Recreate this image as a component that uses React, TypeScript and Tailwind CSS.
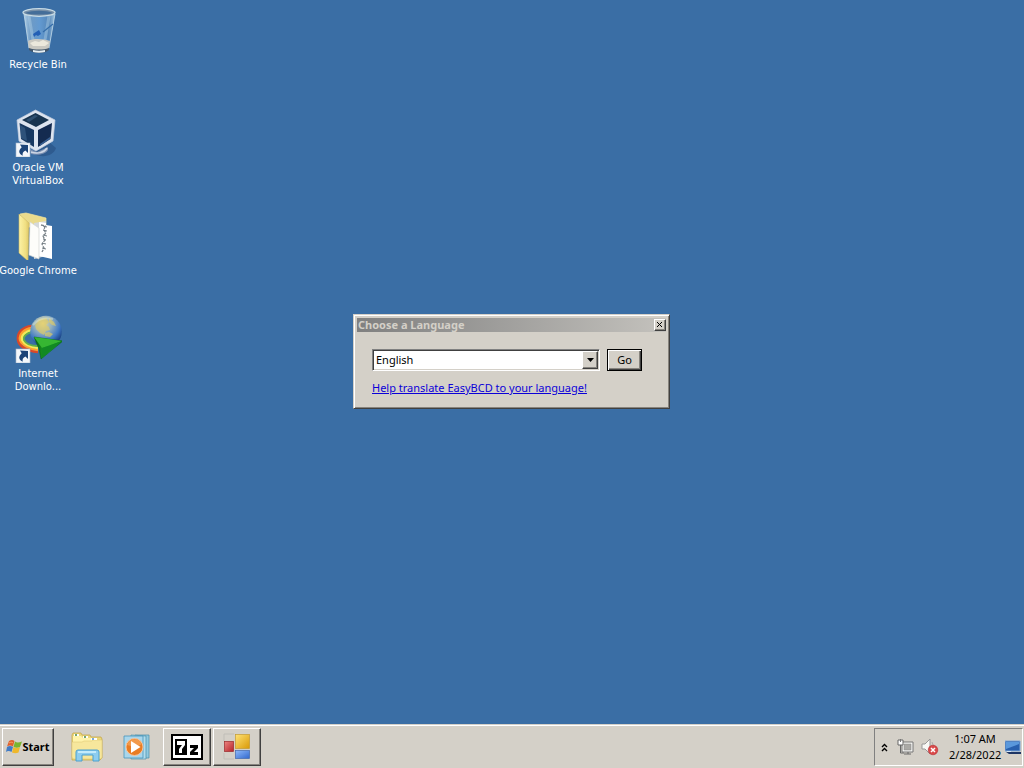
import React, { useState } from 'react';

const raised =
  'border border-t-white border-l-white border-r-[#404040] border-b-[#404040] shadow-[inset_-1px_-1px_0_#87847e]';

function ShortcutArrow() {
  return (
    <g>
      <rect x="2" y="34" width="14" height="14" fill="#f4f7fb" stroke="#a9b8ca" strokeWidth=".6" />
      <path d="M6 35.500l8 .5v8l-2.600-2.500c-2.300 1.100-3.200 2.700-2.700 5.200-3.400-1.600-5.200-4.600-1-8.400z" fill="#1c4478" />
    </g>
  );
}

function RecycleIcon() {
  return (
    <svg viewBox="0 0 48 48" className="size-12" aria-hidden="true">
      <defs>
        <linearGradient id="glass" x1="0" x2="1">
          <stop offset="0" stopColor="#c7e2f4" stopOpacity=".85" />
          <stop offset=".22" stopColor="#7fa9d0" stopOpacity=".75" />
          <stop offset=".5" stopColor="#6da5dc" stopOpacity=".8" />
          <stop offset=".8" stopColor="#5f90c0" stopOpacity=".75" />
          <stop offset="1" stopColor="#b7d6ec" stopOpacity=".85" />
        </linearGradient>
      </defs>
      <path d="M10 8l5 35c3 4 17 4 20 0l6-35z" fill="url(#glass)" />
      <path d="M10 8l5 34M41 8l-6 34" stroke="#c2d9e9" strokeWidth="1" fill="none" opacity=".8" />
      <path d="M15 10l4 24M35 10l-4 24" stroke="#c2dff0" strokeWidth="3" opacity=".35" />
      <path d="M14 35c5-3 17-2 22 0l-1.500 8c-5 3-15 3-19.500 0z" fill="#c9c8c1" />
      <path d="M16 37l5-2 4 1 4-2 6 3-4 3H19z" fill="#ebe8dc" />
      <path d="M15 42c6 2 14 2 20 0v2c-4 4-16 4-20 0z" fill="#43586d" />
      <path d="M19 44c4 1 8 1 12 0v2c-4 1-8 1-12 0z" fill="#e6eef2" />
      <path d="M22 26l3-2 2 4-3 2-2-1-2 2-1-3z" fill="#235fb5" />
      <path d="M29 26l10-8" stroke="#356da9" strokeWidth="1.300" />
      <ellipse cx="25" cy="6.500" rx="16" ry="3.800" fill="#7890a8" stroke="#c9dce6" strokeWidth="1.300" />
      <path d="M11 7c7-3 21-3 28 0-5 2-22 2-28 0" fill="#456e99" />
    </svg>
  );
}

function VirtualBoxIcon() {
  return (
    <svg viewBox="0 0 48 48" className="size-12" aria-hidden="true">
      <path d="M20 43l15-10 7 6c-2 7-11 10-20 7z" fill="#1e3f6d" opacity=".4" />
      <path d="M16 40l7 3 11-5v3c-2 4-10 6-17 4z" fill="#7c90b2" />
      <path d="M17 43c6 2 13 1 16-4" stroke="#ccd6e5" strokeWidth="1.500" fill="none" />
      <path d="M21.500 1L41 11 39 32 22 42 5 32 3 11z" fill="#dde4ef" stroke="#c4cedf" strokeWidth=".7" />
      <path d="M21.500 4L35 11 22 18 8 11z" fill="#18344f" />
      <path d="M5.500 14L20 21v17L7 30z" fill="#173860" />
      <path d="M24 21l14-7-1.500 16L24 38z" fill="#142b50" />
      <path d="M12 11l9-5 3 1-9 6zM6 16l5 3 2 13-6-3z" fill="#4c739b" opacity=".45" />
      <path d="M26 35l10-7v2l-10 7z" fill="#365d90" />
      <ShortcutArrow />
    </svg>
  );
}

function FolderIcon() {
  return (
    <svg viewBox="0 0 48 48" className="size-12" aria-hidden="true">
      <defs>
        <linearGradient id="folder" x1="0" x2="1">
          <stop offset="0" stopColor="#fcf2a6" />
          <stop offset=".65" stopColor="#f0df82" />
          <stop offset="1" stopColor="#dcc567" />
        </linearGradient>
      </defs>
      <path d="M6 2l6-1 20 5v9H14z" fill="#eadb8c" stroke="#f6e79d" strokeWidth=".7" />
      <path d="M20 11l12-2v35l-12 3z" fill="#d5d9dc" />
      <path d="M25 10l7 1v2l6 1v33l-13-3z" fill="#fff" />
      <path d="M27 13l4 1-1 4 2 3-3 3 2 4-3 4 2 4-2 4" stroke="#7c858b" strokeWidth="1.300" fill="none" strokeDasharray="3 1" />
      <path d="M29 14l4 1M29 18l4 1M29 23l4 1M29 27l3 1M28 31l4 1M28 36l4 1" stroke="#69747c" strokeWidth=".9" />
      <path d="M16 10l9 6v31l-10-4z" fill="#fdfdfa" stroke="#d2d5d3" strokeWidth=".7" />
      <path d="M5 2l10 9-1 38L5 41z" fill="url(#folder)" stroke="#cfbb62" strokeWidth=".6" />
    </svg>
  );
}

function DownloadIcon() {
  return (
    <svg viewBox="0 0 48 48" className="size-12" aria-hidden="true">
      <defs>
        <radialGradient id="globe" cx=".4" cy=".25" r=".75">
          <stop offset="0" stopColor="#eadc9c" />
          <stop offset=".38" stopColor="#91afc0" />
          <stop offset=".72" stopColor="#3e78c4" />
          <stop offset="1" stopColor="#153978" />
        </radialGradient>
        <linearGradient id="arrow" x1="0" x2="1">
          <stop offset="0" stopColor="#075a11" />
          <stop offset=".5" stopColor="#22b92b" />
          <stop offset="1" stopColor="#086d16" />
        </linearGradient>
      </defs>
      <g fill="none">
        <path d="M18 11C8 12 3 18 4 25c1 6 8 11 20 12" stroke="#d8482a" strokeWidth="2.600" />
        <path d="M18 13C10 14 5 19 6 25c2 5 9 9 18 10" stroke="#ff9f2b" strokeWidth="2.400" />
        <path d="M18 15c-6 1-11 5-10 10 2 4 8 7 16 8" stroke="#f3ea57" strokeWidth="2.400" />
        <path d="M18 17c-5 1-9 4-8 8 2 4 7 6 14 6" stroke="#62ad4c" strokeWidth="1.800" />
      </g>
      <circle cx="32" cy="16.500" r="15.800" fill="url(#globe)" />
      <path d="M21 10l4-5 7-2 3 4-3 3 3 2 1 3-4 1-2 4-4-2-4-4zM35 3l5 4 2 4-4-1-3-3zM31 18l4-1 4 2-3 3-5-1z" fill="#e2cd62" opacity=".65" />
      <path d="M19 10c5-6 12-8 20-6" stroke="#eef3d0" strokeWidth="2" fill="none" opacity=".4" />
      <path d="M20 22l29 4-22 18-2-10z" fill="url(#arrow)" stroke="#096217" strokeWidth=".5" />
      <path d="M20 22l28 4-20 7z" fill="#36b632" />
      <path d="M28 33l20-7-20 17z" fill="#128923" />
      <ShortcutArrow />
    </svg>
  );
}

function WindowsFlag() {
  return (
    <svg viewBox="0 0 16 16" className="size-4 shrink-0" aria-hidden="true">
      <path d="M3 2c2-1.500 4-1.500 5.500 0L7 7.500C5 6 3 6 1 7.500z" fill="#df602b" />
      <path d="M9 2.500c2 1.500 4 1 7 0L14 8c-2 1-4 1-6.500 0z" fill="#79b52f" />
      <path d="M1 8c2-1.500 4-1.500 6 0l-1.500 5c-2-1.500-4-1.500-5.500 0z" fill="#417bc5" />
      <path d="M7.500 8c2 1.500 4 1 6.500 0l-1.500 5.500c-2 1-4 1-6.500 0z" fill="#efb82b" />
      <path d="M3 4c2-1 3-1 4 0" stroke="#f5a36c" fill="none" />
    </svg>
  );
}

function ExplorerIcon() {
  return (
    <svg viewBox="0 0 34 32" className="h-8 w-[34px]" aria-hidden="true">
      <path d="M2 6V4l1-2h8l1 2h8l1 2h10l1 2v19l-2 2H2z" fill="#ecd779" stroke="#c4a74d" strokeWidth=".8" />
      <path d="M3 5h8l2 2h8l2 2h8v18H3z" fill="#fff3aa" />
      <path d="M2 11h10l2-1h8l1-1h9v17q0 2-2 2H4q-2 0-2-2z" fill="#f7e79c" stroke="#d9c26c" strokeWidth=".5" />
      <path d="M4 4h5M13 6h5M21 8h6" stroke="#fff" strokeWidth="2" />
      <path d="M5 4h2M14 6h2" stroke="#478945" strokeWidth="1.500" />
      <path d="M22 8h2" stroke="#4f8dca" strokeWidth="1.500" />
      <path d="M6 30v-9q0-2 2-2h19q2 0 2 2v9h-6v-6H12v6z" fill="#8dcdef" stroke="#4ba0cf" />
      <path d="M8 21h18" stroke="#d6f4ff" strokeWidth="1.500" fill="none" />
    </svg>
  );
}

function MediaIcon() {
  return (
    <svg viewBox="0 0 28 28" className="size-7" aria-hidden="true">
      <path d="M12 2h14v23H13z" fill="#91c9df" stroke="#488eaa" strokeWidth=".7" />
      <path d="M8 2l15 1v23H8z" fill="#b2dceb" stroke="#478eab" strokeWidth=".7" />
      <path d="M1 3h19v22H1z" fill="#a9d6eb" stroke="#4794bb" strokeWidth=".8" />
      <circle cx="11.500" cy="14" r="8.500" fill="#e97c23" stroke="#f7c39a" strokeWidth="1" />
      <path d="M4 12c2-7 12-8 15-1-4 3-9 3-15 1" fill="#f8ad65" opacity=".6" />
      <path d="M8 8l9.500 6L8 20z" fill="#fff" />
    </svg>
  );
}

function SevenZipIcon() {
  return (
    <span className="flex h-[26px] w-8 items-center justify-center border-2 border-black bg-white">
      <svg viewBox="0 0 24 18" className="h-[18px] w-6" aria-hidden="true">
        <path d="M0 1h12v16H0z" />
        <path d="M2 3h8v4L7 11v4H4v-4l3-4H2z" fill="#fff" />
        <path d="M15 7h8v3l-4 4h4v3h-8v-3l4-4h-4z" />
      </svg>
    </span>
  );
}

function BlocksIcon() {
  return (
    <svg viewBox="0 0 28 28" className="size-7" aria-hidden="true">
      <defs>
        <linearGradient id="yellow" x2="1" y2="1"><stop stopColor="#ffe275" /><stop offset="1" stopColor="#d99907" /></linearGradient>
        <linearGradient id="red" x2="1" y2="1"><stop stopColor="#ed8580" /><stop offset="1" stopColor="#b5232a" /></linearGradient>
        <linearGradient id="blue" x2="1" y2="1"><stop stopColor="#8db9fa" /><stop offset="1" stopColor="#3268cd" /></linearGradient>
      </defs>
      <path d="M1 8V1h10M1 20v6h10" stroke="#c0beb8" fill="none" />
      <rect x="12.500" y="1.500" width="14" height="14" fill="url(#yellow)" stroke="#c39a32" strokeWidth=".7" />
      <rect x="1.500" y="8.500" width="9" height="10" fill="url(#red)" stroke="#9b292b" strokeWidth=".7" />
      <rect x="12.500" y="17.500" width="14" height="8" fill="url(#blue)" stroke="#4269ae" strokeWidth=".7" />
    </svg>
  );
}

const shortcuts = [
  { label: 'Recycle Bin', lines: ['Recycle Bin'], icon: <RecycleIcon /> },
  { label: 'Oracle VM VirtualBox', lines: ['Oracle VM', 'VirtualBox'], icon: <VirtualBoxIcon /> },
  { label: 'Google Chrome', lines: ['Google Chrome'], icon: <FolderIcon /> },
  { label: 'Internet Downlo...', lines: ['Internet', 'Downlo...'], icon: <DownloadIcon /> },
];

function LanguageDialog() {
  const [language, setLanguage] = useState('English');
  return (
    <section
      role="dialog"
      aria-labelledby="dialog-title"
      className="absolute top-[314px] left-[353px] w-[317px] border border-t-[#d4d0c8] border-r-[#404040] border-b-[#404040] border-l-[#d4d0c8] bg-[#d4d0c8] p-[3px] text-[11px] shadow-[inset_1px_1px_0_#fff,inset_-1px_-1px_0_#87847e]"
    >
      <header className="flex h-[14px] items-center justify-between bg-linear-to-r from-[#808080] to-[#c4c2bd] pl-px">
        <h1 id="dialog-title" className="font-bold text-[#d4d0c8]">Choose a Language</h1>
        <button aria-label="Close" className={`flex h-3 w-3 items-center justify-center bg-[#d4d0c8] ${raised}`}>
          <svg viewBox="0 0 8 8" className="size-2" aria-hidden="true"><path d="M1 1l5 5M6 1L1 6" stroke="#000" strokeWidth="1" /></svg>
        </button>
      </header>
      <div className="px-[15px] pt-[17px] pb-[9px]">
        <div className="flex items-center gap-[7px]">
          <div className="relative h-[22px] w-[228px] border border-t-[#808080] border-r-white border-b-white border-l-[#808080] bg-white shadow-[inset_1px_1px_0_#404040,inset_-1px_-1px_0_#d4d0c8]">
            <select
              aria-label="Language"
              value={language}
              onChange={(e) => setLanguage(e.target.value)}
              className="h-full w-full appearance-none bg-transparent pr-5 pl-[3px] text-black outline-none"
            >
              <option>English</option>
            </select>
            <span className={`pointer-events-none absolute top-px right-px flex h-[18px] w-4 items-center justify-center bg-[#d4d0c8] ${raised}`}>
              <svg viewBox="0 0 7 4" className="h-1 w-[7px]" aria-hidden="true"><path d="M0 0h7L3.500 4z" /></svg>
            </span>
          </div>
          <button className="h-[22px] w-[35px] border border-black bg-[#d4d0c8] text-black shadow-[inset_1px_1px_0_#fff,inset_-1px_-1px_0_#404040,inset_-2px_-2px_0_#87847e]">Go</button>
        </div>
        <a href="#translate" className="mt-[9px] block w-fit leading-4 whitespace-nowrap text-[#0b00d8] underline">
          Help translate EasyBCD to your language!
        </a>
      </div>
    </section>
  );
}

export default function App() {
  return (
    <div className="flex min-h-screen flex-col bg-[#3a6ea5] font-['Noto_Sans','Open_Sans',sans-serif] text-[11px]">
      <main className="relative flex-1">
        <ul className="flex w-19 flex-col font-['DejaVu_Sans',sans-serif] text-[10px]">
          {shortcuts.map((s) => (
            <li key={s.label}>
              <a href="#open" className="flex h-[103px] flex-col items-center gap-1 pt-1.5 text-center leading-[13px] text-white">
                {s.icon}
                <span>
                  {s.lines.map((line) => (
                    <span key={line} className="block whitespace-nowrap">{line}</span>
                  ))}
                </span>
              </a>
            </li>
          ))}
        </ul>
        <LanguageDialog />
      </main>

      <footer className="flex h-11 items-stretch justify-between border-t border-[#d4d0c8] bg-[#d4d0c8] pt-[3px] pr-px pb-0.5 pl-0.5 shadow-[inset_0_1px_0_#fff]">
        <nav className="flex items-stretch" aria-label="Taskbar">
          <button className={`flex w-[52px] items-center justify-center font-bold text-black ${raised}`}>
            <WindowsFlag />
            Start
          </button>
          <button aria-label="Windows Explorer" className="ml-2 flex w-[50px] items-center justify-center"><ExplorerIcon /></button>
          <button aria-label="Media Player" className="flex w-[50px] items-center justify-center"><MediaIcon /></button>
          <button aria-label="7-Zip" className={`ml-px flex w-12 items-center justify-center ${raised}`}><SevenZipIcon /></button>
          <button aria-label="Choose a Language" className={`ml-0.5 flex w-12 items-center justify-center ${raised}`}><BlocksIcon /></button>
        </nav>
        <div className="flex items-center border border-t-[#808080] border-r-white border-b-white border-l-[#808080] pr-px pl-1">
          <button aria-label="Show hidden icons" className="flex w-2.5 justify-center">
            <svg viewBox="0 0 7 9" className="h-[9px] w-[7px]" fill="none" stroke="#000" strokeWidth="1.400" aria-hidden="true"><path d="M1 4l2.500-2.500L6 4M1 8l2.500-2.500L6 8" /></svg>
          </button>
          <button aria-label="Network" className="ml-2">
            <svg viewBox="0 0 18 18" className="size-[18px]" aria-hidden="true">
              <path d="M5 4h11v10H5z" fill="#f4f4f1" stroke="#777" />
              <path d="M7 6h7v6H7z" fill="#aaa9a5" stroke="#888" strokeWidth=".5" />
              <path d="M7 16h7M11 14v2" stroke="#666" />
              <path d="M1 2h5v5H1z" fill="#fff" stroke="#666" />
              <path d="M3.500 1v3" stroke="#777" />
              <path d="M3.500 7v8H7" stroke="#666" fill="none" />
            </svg>
          </button>
          <button aria-label="Volume" className="ml-1.5">
            <svg viewBox="0 0 18 18" className="size-[18px]" aria-hidden="true">
              <path d="M1 6h3l5-5v15l-5-5H1z" fill="#f8f8f5" stroke="#999" />
              <path d="M11 4q3 4 0 8" stroke="#aaa" fill="none" />
              <circle cx="12" cy="12" r="4.800" fill="#d94a4a" stroke="#af1e26" strokeWidth=".5" />
              <path d="M10 10l4 4M14 10l-4 4" stroke="#fff" strokeWidth="1.500" />
            </svg>
          </button>
          <time className="ml-2.5 w-[52px] text-center leading-4 whitespace-nowrap text-black">1:07 AM<br />2/28/2022</time>
          <button aria-label="Display" className="ml-1">
            <svg viewBox="0 0 16 15" className="h-[15px] w-4" aria-hidden="true">
              <path d="M0 1h15v10H0z" fill="#2860ae" stroke="#7ea7d7" />
              <path d="M1 2h13v2L1 9z" fill="#5a98dc" />
              <path d="M1 12h15v2H4z" fill="#1d3564" />
              <path d="M2 11h4v1H2z" fill="#d6e7f7" />
            </svg>
          </button>
        </div>
      </footer>
    </div>
  );
}
